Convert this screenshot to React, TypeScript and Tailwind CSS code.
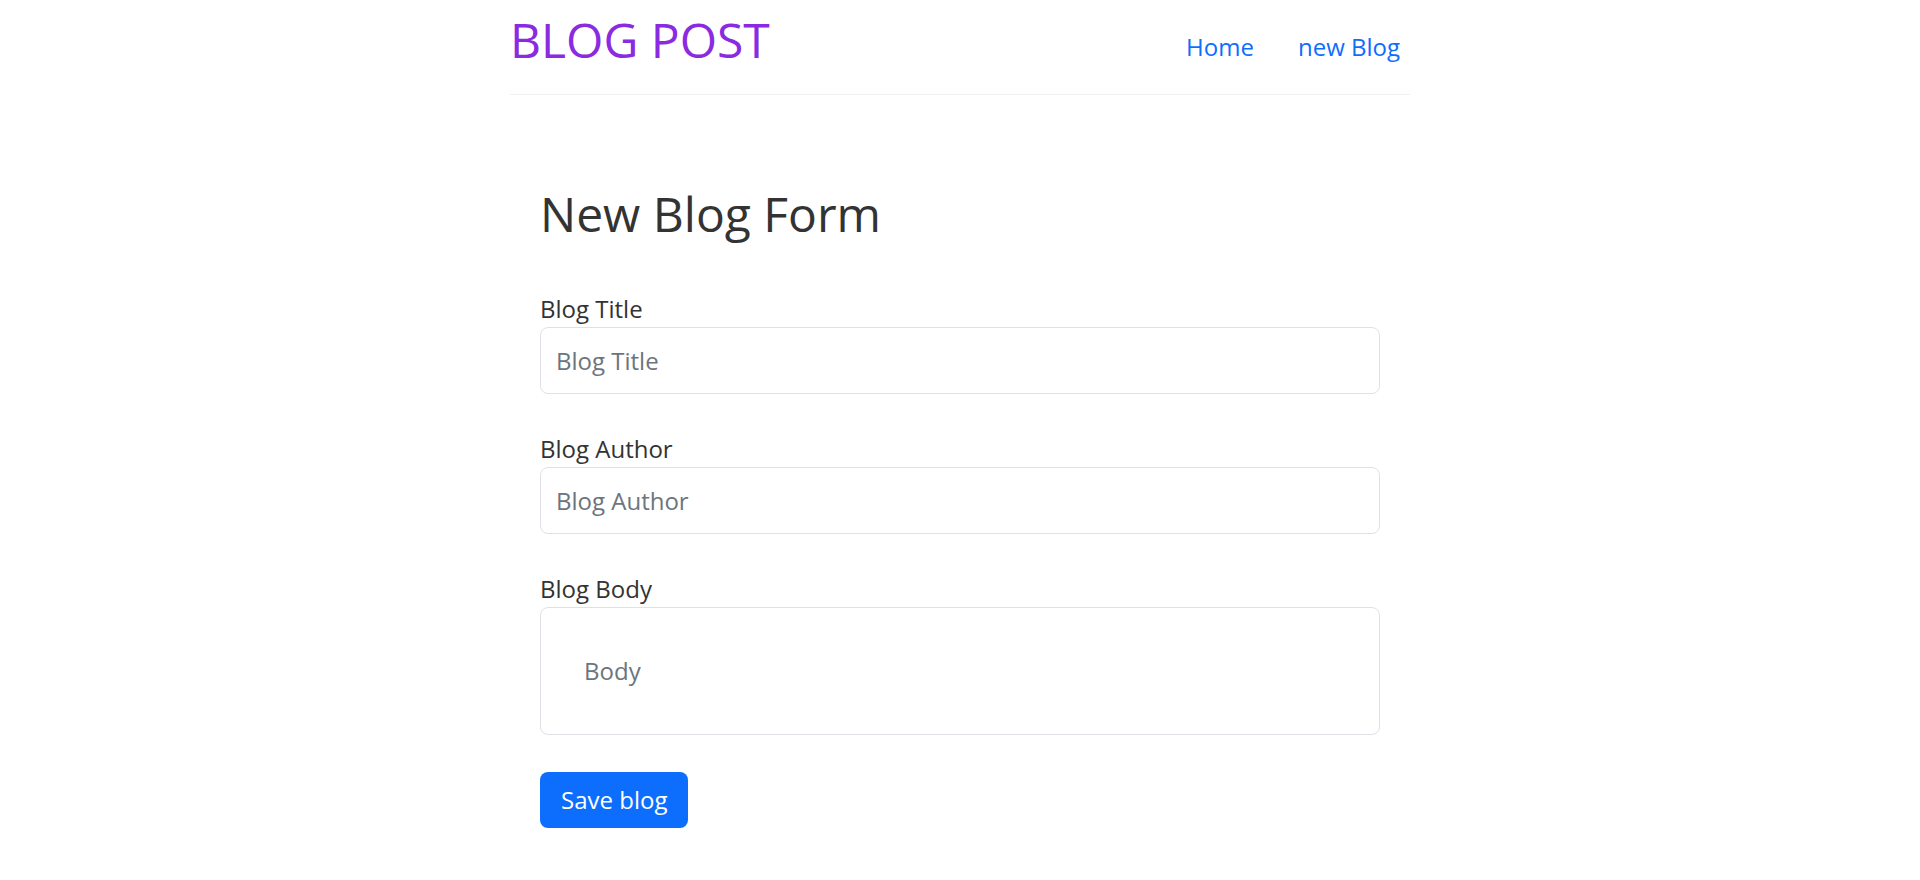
import React, { useState } from 'react';

export default function App() {
  const [title, setTitle] = useState('');
  const [author, setAuthor] = useState('');
  const [body, setBody] = useState('');

  const handleSubmit = (e: React.FormEvent) => {
    e.preventDefault();
  };

  return (
    <div className="min-h-screen bg-white font-['Open_Sans','Liberation_Sans',sans-serif] text-[#333333]">
      <div className="mx-auto w-[900px]">
        {/* Header */}
        <header className="flex h-[95px] items-start justify-between border-b border-[#f0f0f0]">
          <h1 className="mt-[11px] text-[48px] font-normal leading-[1.2] text-[#8a2be2]">BLOG POST</h1>
          <nav className="mt-[29px] mr-[10px] flex gap-[44px] text-[24px] leading-[36px] text-[#0d6efd]">
            <a href="#" className="hover:underline">Home</a>
            <a href="#" className="hover:underline">new Blog</a>
          </nav>
        </header>

        {/* Form */}
        <form onSubmit={handleSubmit} className="px-[30px] pt-[90px]">
          <h2 className="mb-[48px] text-[48px] font-normal leading-[1.2]">New Blog Form</h2>

          <div className="mb-[37px]">
            <label className="block text-[24px] leading-[36px]">Blog Title</label>
            <input
              type="text"
              placeholder="Blog Title"
              value={title}
              onChange={(e) => setTitle(e.target.value)}
              className="block h-[67px] w-full rounded-[8px] border border-[#dee2e6] px-[15px] text-[24px] leading-[36px] outline-none placeholder:text-[#6c757d]"
            />
          </div>

          <div className="mb-[37px]">
            <label className="block text-[24px] leading-[36px]">Blog Author</label>
            <input
              type="text"
              placeholder="Blog Author"
              value={author}
              onChange={(e) => setAuthor(e.target.value)}
              className="block h-[67px] w-full rounded-[8px] border border-[#dee2e6] px-[15px] text-[24px] leading-[36px] outline-none placeholder:text-[#6c757d]"
            />
          </div>

          <div className="mb-[37px]">
            <label className="block text-[24px] leading-[36px]">Blog Body</label>
            <textarea
              placeholder="Body"
              value={body}
              onChange={(e) => setBody(e.target.value)}
              className="block h-[128px] w-full resize-none rounded-[8px] border border-[#dee2e6] px-[43px] pt-[45px] text-[24px] leading-[36px] outline-none placeholder:text-[#6c757d]"
            />
          </div>

          <button
            type="submit"
            className="h-[56px] rounded-[8px] bg-[#0d6efd] px-[21px] text-[24px] leading-[36px] text-white hover:bg-[#0b5ed7]"
          >
            Save blog
          </button>
        </form>
      </div>
    </div>
  );
}
